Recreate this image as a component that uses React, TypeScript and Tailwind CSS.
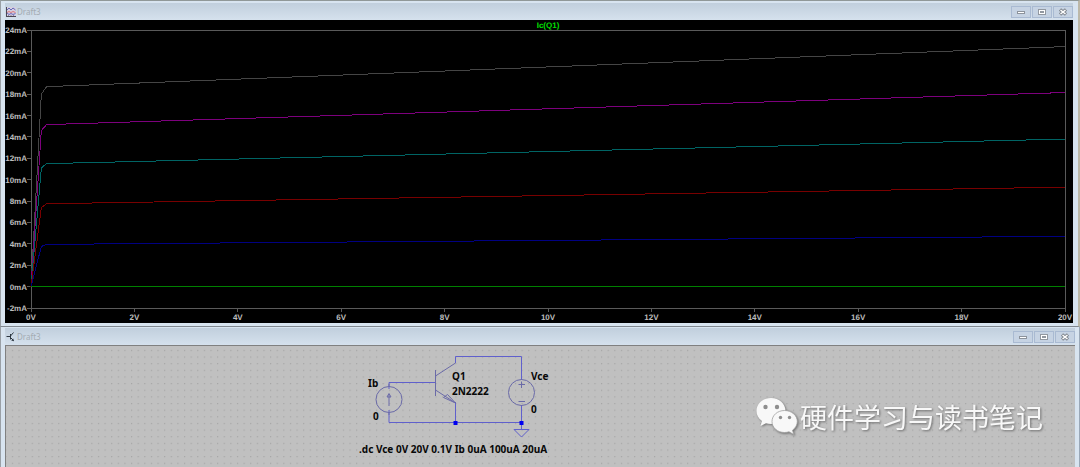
import type { ReactNode } from "react";

const yTicks = [24, 22, 20, 18, 16, 14, 12, 10, 8, 6, 4, 2, 0, -2];
const xTicks = [0, 2, 4, 6, 8, 10, 12, 14, 16, 18, 20];

// plot area in viewBox units
const LEFT = 26;
const RIGHT = 1060;
const TOP = 10;
const BOTTOM = 288;

const toX = (volts: number) => LEFT + (volts * (RIGHT - LEFT)) / 20;
const toY = (amps: number) => TOP + ((24 - amps) * (BOTTOM - TOP)) / 26;

// collector current at 0.2V, 0.3V and 20V for each base current step
const traces = [
  { name: "100uA", color: "#454545", mA: [18.0, 18.7, 22.45] },
  { name: "80uA", color: "#7d007d", mA: [14.6, 15.15, 18.15] },
  { name: "60uA", color: "#006464", mA: [11.1, 11.5, 13.8] },
  { name: "40uA", color: "#780000", mA: [7.4, 7.75, 9.3] },
  { name: "20uA", color: "#000082", mA: [3.75, 3.95, 4.7] },
  { name: "0uA", color: "#008000", mA: [0, 0, 0] },
];

const WaveformIcon = () => (
  <svg viewBox="0 0 10 10" className="w-[10px] h-[10px]" aria-hidden="true">
    <rect width="10" height="10" fill="#d4cfe0" />
    <path d="M0.5 0V10M0 9.5H10M2.5 8.5V10M5 8.5V10M7.5 8.5V10" stroke="#4c4756" fill="none" />
    <path d="M1 3L3 1L5 3L7 1L9.5 3" stroke="#6868b8" fill="none" />
    <path d="M1 5.5L3 4.5L5 5.5L7 4.5L9.5 5.5" stroke="#e07878" fill="none" />
    <path d="M1 6L3 7.5L5 6.5L7 7.5L9.5 6.5" stroke="#6868c0" fill="none" />
  </svg>
);

const TransistorIcon = () => (
  <svg viewBox="0 0 10 10" className="w-[10px] h-[10px]" aria-hidden="true">
    <path d="M0.5 4.5H4M4.5 2V7.5M4.5 4L7.5 0.5M4.5 5.5L7.5 8.5" stroke="#2c3640" fill="none" />
    <path d="M8 9.2L5.2 8.4L7.2 6.4Z" fill="#2c3640" />
  </svg>
);

const WindowButton = ({ label, children }: { label: string; children: ReactNode }) => (
  <button
    type="button"
    aria-label={label}
    className="flex items-center justify-center w-5 h-3 border border-[#a9bad2] bg-[#c6d3e3]"
  >
    <svg viewBox="0 0 10 8" className="w-[10px] h-2" fill="none">
      {children}
    </svg>
  </button>
);

const TitleBar = ({ icon, title }: { icon: ReactNode; title: string }) => (
  <header className="flex items-center h-[17px] pl-px bg-linear-to-b from-[#c1cfdd] to-[#d5e1ed]">
    {icon}
    <h2 className="ml-px flex-1 text-[8px] leading-3 text-[#a3abb2]">{title}</h2>
    <div className="flex gap-px">
      <WindowButton label="Minimize">
        <rect x="1.5" y="3.5" width="7" height="2" fill="#fff" stroke="#8c939c" />
      </WindowButton>
      <WindowButton label="Maximize">
        <rect x="1.5" y="1.5" width="7" height="5" fill="#fff" stroke="#9298a0" />
        <rect x="3.5" y="3.5" width="3" height="1" fill="#fff" stroke="#9298a0" />
      </WindowButton>
      <WindowButton label="Close">
        <path d="M2 1.5L8 6.5M8 1.5L2 6.5" stroke="#7f858d" strokeWidth="3.4" />
        <path d="M2.5 2L7.5 6M7.5 2L2.5 6" stroke="#fff" strokeWidth="1.5" />
      </WindowButton>
    </div>
  </header>
);

const WaveformPlot = () => (
  <svg
    viewBox="0 0 1068 303"
    className="block w-full h-auto bg-black font-['Liberation_Sans',sans-serif] text-[8px] font-bold"
    textRendering="geometricPrecision"
    role="img"
    aria-label="Ic(Q1)"
  >
    <g stroke="#5a5a5a" fill="none" shapeRendering="crispEdges">
      <path d={`M${LEFT} ${TOP}H${RIGHT}V${BOTTOM}H${LEFT}Z`} />
      {yTicks.map((tick) => (
        <path key={tick} d={`M${LEFT - 4} ${toY(tick)}H${LEFT}`} />
      ))}
      {xTicks.map((tick) => (
        <path key={tick} d={`M${toX(tick)} ${BOTTOM}V${BOTTOM + 4}`} />
      ))}
    </g>
    {traces.map(({ name, color, mA }) => (
      <polyline
        key={name}
        points={`${toX(0)},${toY(0)} ${toX(0.2)},${toY(mA[0])} ${toX(0.3)},${toY(mA[1])} ${toX(20)},${toY(mA[2])}`}
        stroke={color}
        fill="none"
        shapeRendering="crispEdges"
      />
    ))}
    <text x="543" y="8" textAnchor="middle" fill="#00e000">
      Ic(Q1)
    </text>
    <g fill="#bcbcbc">
      {yTicks.map((tick) => (
        <text key={tick} x={LEFT - 4} y={toY(tick) + 3} textAnchor="end">
          {`${tick}mA`}
        </text>
      ))}
      {xTicks.map((tick) => (
        <text key={tick} x={toX(tick)} y={BOTTOM + 12} textAnchor="middle">
          {`${tick}V`}
        </text>
      ))}
    </g>
  </svg>
);

const GridDots = () => (
  <svg className="absolute inset-0 w-full h-full" aria-hidden="true">
    <defs>
      <pattern id="dots" x="3" y="1" width="6.62" height="6.64" patternUnits="userSpaceOnUse">
        <rect x="3" y="3" width="1" height="1" fill="#989898" />
      </pattern>
    </defs>
    <rect width="100%" height="100%" fill="url(#dots)" />
  </svg>
);

const Schematic = () => (
  <svg
    viewBox="359 350 196 110"
    className="relative w-[196px] h-[110px] shrink-0 overflow-visible text-[10px] font-bold"
    role="img"
    aria-label="2N2222 test circuit"
  >
    <g stroke="#6060cc" fill="none">
      <path d="M389 389V382.5H435M455.5 363V356.5H521.5V380M389 410V422.5H521.5M455.5 402V422.5M521.5 405V429.5" />
      <path d="M514 429.5H529L521.5 437Z" />
    </g>
    <g stroke="#6a6aa8" fill="none">
      <circle cx="389" cy="399.5" r="13" />
      <path d="M389 386.5V384M389 413V415M389 406V394M387 397L389 393.5L391 397Z" />
      <path d="M435.5 370V396M435.5 376L455.5 363M435.5 390L455.5 403" />
      <path d="M455.5 403L443.5 397.5L447.5 394.5Z" />
      <circle cx="521.5" cy="392.5" r="13" />
      <path d="M518.5 384.5H525M521.5 381.5V388M518.5 401.5H525" />
    </g>
    <rect x="453.5" y="421" width="4" height="4" fill="#0000f0" />
    <rect x="519.5" y="421" width="4" height="4" fill="#0000f0" />
    <g fill="#080808">
      <text x="368" y="387">Ib</text>
      <text x="373" y="420">0</text>
      <text x="452" y="380">Q1</text>
      <text x="452" y="395">2N2222</text>
      <text x="531" y="380">Vce</text>
      <text x="531" y="413">0</text>
      <text x="359" y="453">.dc Vce 0V 20V 0.1V Ib 0uA 100uA 20uA</text>
    </g>
  </svg>
);

const WeChatLogo = () => (
  <svg viewBox="0 0 42 37" className="w-[42px] h-[37px]" aria-hidden="true">
    <path
      d="M15 0C6.700 0 0.500 5.800 0.500 13C0.500 17 2.500 20.600 6 23L4.500 28L10 25.200C11.600 25.700 13.300 26 15 26C23.300 26 29.500 20.200 29.500 13C29.500 5.800 23.300 0 15 0Z"
      fill="#f8f8f8"
    />
    <path
      d="M28.500 12.500C21.500 12.500 16 17.300 16 23.500C16 29.700 21.500 34.500 28.500 34.500C30 34.500 31.600 34.200 33 33.800L37.800 36.500L36.500 32.200C39.500 30 41.300 27 41.300 23.500C41.300 17.300 35.500 12.500 28.500 12.500Z"
      fill="#f8f8f8"
      stroke="#a0a0a0"
      strokeWidth="0.8"
    />
    <g fill="#8e8e8e">
      <circle cx="9.500" cy="9" r="2.200" />
      <circle cx="21" cy="9" r="2.200" />
      <circle cx="24.500" cy="19.500" r="1.700" />
      <circle cx="33.500" cy="19.500" r="1.700" />
    </g>
  </svg>
);

const App = () => {
  return (
    <main className="flex flex-col min-h-screen bg-[#d8e4f0] font-['Noto_Sans',sans-serif]">
      <section className="border-t border-b border-l border-t-[#909898] border-b-[#808890] border-l-[#9aa0a6] border-r-2 border-r-[#bcb8a8]">
        <div className="pt-0.5 pl-1 pr-[5px] pb-[3px]">
          <TitleBar icon={<WaveformIcon />} title="Draft3" />
          <WaveformPlot />
        </div>
      </section>
      <section className="flex flex-col flex-1 border-l border-l-[#9aa0a6] border-r border-r-[#9aa8b8]">
        <div className="flex flex-col flex-1 pt-px pl-1 pr-1">
          <TitleBar icon={<TransistorIcon />} title="Draft3" />
          <div className="relative flex flex-1 items-start justify-between border-t border-l border-[#808080] bg-[#c0c0c0] pt-1 pl-[33%]">
            <GridDots />
            <Schematic />
            <div className="relative flex items-center gap-0.5 mt-12 mr-8 drop-shadow-[1px_1px_1px_#707070]">
              <WeChatLogo />
              <p className="font-['Noto_Sans_CJK_SC',sans-serif] text-[27px] leading-9 whitespace-nowrap text-[#f8f8f8]">
                硬件学习与读书笔记
              </p>
            </div>
          </div>
        </div>
      </section>
    </main>
  );
};

export default App;
